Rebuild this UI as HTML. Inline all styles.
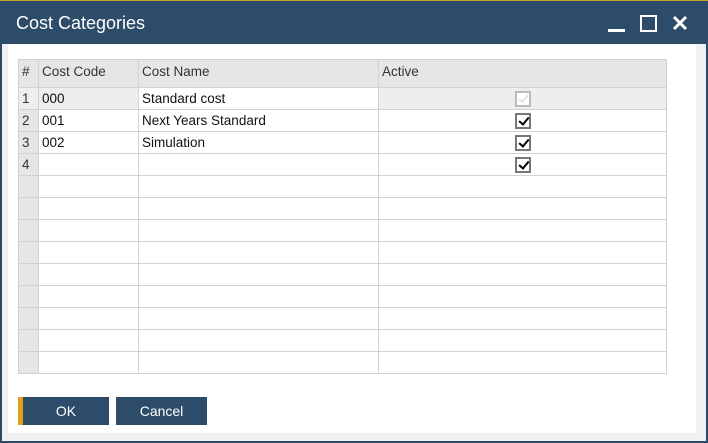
<!DOCTYPE html>
<html><head><style>
*{margin:0;padding:0;box-sizing:border-box}
body{width:708px;height:443px;overflow:hidden;background:#2b4a67;font-family:"Liberation Sans",sans-serif;position:relative}
.tb{position:absolute;left:0;top:0;width:708px;height:44px;background:#2d4c69;border-top:1px solid #c9a227}
.tb .t{position:absolute;left:16px;top:12px;color:#fff;font-size:18px}
.body{position:absolute;left:2px;top:44px;width:704px;height:397px;background:#f1f1f1}
.inner{position:absolute;left:6px;top:0;width:688px;height:389px;background:#fff}
table{position:absolute;left:18px;top:59px;border-collapse:collapse;font-size:13.5px;color:#111}
td{border:1px solid #d2d2d2;height:22px;padding:0 3px;white-space:nowrap;vertical-align:middle}
tr.h td{height:28px;background:#e6e6e6;color:#333;vertical-align:top;padding-top:4px}
td.n{background:#e6e6e6;color:#333}
tr.sel td{background:#eceef0}
.cb{display:block;margin:0 auto;width:16px;height:16px;border:2px solid #777;background:#fff;position:relative}
.cb.d{border-color:#bbb}
.cb:after{content:"";position:absolute;left:4px;top:0px;width:4px;height:8px;border:solid #000;border-width:0 2px 2px 0;transform:rotate(40deg)}
.cb.d:after{border-color:#ccc;border-width:0 1px 1px 0}
.btn{position:absolute;top:397px;height:28px;width:91px;background:#2d4c69;color:#fff;font-size:14px;text-align:center;line-height:28px}
</style></head><body>
<div class="tb"><div class="t">Cost Categories</div>
<svg style="position:absolute;left:600px;top:10px" width="100" height="26">
<rect x="8" y="18" width="17" height="3" fill="#fff"/>
<rect x="41" y="5" width="15" height="15" fill="none" stroke="#fff" stroke-width="2"/>
<path d="M74 6 L86 18 M86 6 L74 18" stroke="#fff" stroke-width="3"/>
</svg></div>
<div class="body"><div class="inner"></div></div>
<table>
<tr class="h"><td style="width:20px">#</td><td style="width:100px">Cost Code</td><td style="width:240px">Cost Name</td><td style="width:288px">Active</td></tr>
<tr class="sel"><td class="n">1</td><td>000</td><td style="background:#fff">Standard cost</td><td><span class="cb d"></span></td></tr>
<tr><td class="n">2</td><td>001</td><td>Next Years Standard</td><td><span class="cb"></span></td></tr>
<tr><td class="n">3</td><td>002</td><td>Simulation</td><td><span class="cb"></span></td></tr>
<tr><td class="n">4</td><td></td><td></td><td><span class="cb"></span></td></tr>
<tr><td class="n"></td><td></td><td></td><td></td></tr>
<tr><td class="n"></td><td></td><td></td><td></td></tr>
<tr><td class="n"></td><td></td><td></td><td></td></tr>
<tr><td class="n"></td><td></td><td></td><td></td></tr>
<tr><td class="n"></td><td></td><td></td><td></td></tr>
<tr><td class="n"></td><td></td><td></td><td></td></tr>
<tr><td class="n"></td><td></td><td></td><td></td></tr>
<tr><td class="n"></td><td></td><td></td><td></td></tr>
<tr><td class="n"></td><td></td><td></td><td></td></tr>
</table>
<div class="btn" style="left:18px;border-left:5px solid #e2a014">OK</div>
<div class="btn" style="left:116px">Cancel</div>
</body></html>
